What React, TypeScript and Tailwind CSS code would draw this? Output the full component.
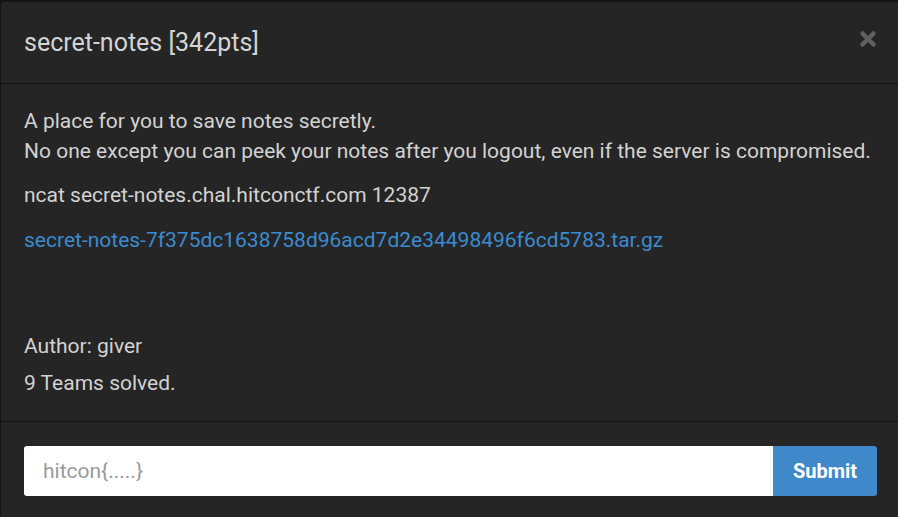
export default function App() {
  return (
    <div className="w-[898px] h-[517px] overflow-hidden bg-[#141414] pt-[2px] pl-[1px] font-['Roboto',sans-serif]">
      <div className="h-full bg-[#252525] rounded-tl-[3px] flex flex-col">
        {/* header */}
        <div className="h-[82px] shrink-0 flex items-center justify-between pl-[23px] pr-6 border-b border-[#131313]">
          <h4 className="text-[25px] text-[#d4d4d4] leading-none">secret-notes [342pts]</h4>
          <svg width="18" height="18" viewBox="0 0 18 18" className="mr-[-3px] mt-[-7px]">
            <path d="M3.5 3.5 L14.5 14.5 M14.5 3.5 L3.5 14.5" stroke="#5f5f5f" strokeWidth="4.5" strokeLinecap="round" />
          </svg>
        </div>

        {/* body */}
        <div className="shrink-0 px-[23px] pt-[23px] pb-[23px] text-[21px] leading-[29px] text-[#d2d2d2] border-b border-[#131313]">
          <p className="mb-[16px]">
            A place for you to save notes secretly.
            <br />
            <span className="relative top-[1px]">
              No one except you can peek your notes after you logout, even if the server is compromised.
            </span>
          </p>
          <p className="mb-[16px]">ncat secret-notes.chal.hitconctf.com 12387</p>
          <p className="mb-[77px]">
            <a className="text-[#3b8bd0]">secret-notes-7f375dc1638758d96acd7d2e34498496f6cd5783.tar.gz</a>
          </p>
          <p className="mb-[8px]">Author: giver</p>
          <p>9 Teams solved.</p>
        </div>

        {/* footer */}
        <div className="px-[23px] pt-6 flex">
          <input
            placeholder="hitcon{.....}"
            className="h-[50px] w-[749px] shrink-0 bg-white rounded-l-[3px] px-[19px] text-[21px] text-[#333] placeholder:text-[#9a9a9a] outline-none"
          />
          <button className="h-[50px] w-[104px] shrink-0 bg-[#3f88c9] rounded-r-[3px] text-white font-bold text-[20px]">
            Submit
          </button>
        </div>
      </div>
    </div>
  );
}
